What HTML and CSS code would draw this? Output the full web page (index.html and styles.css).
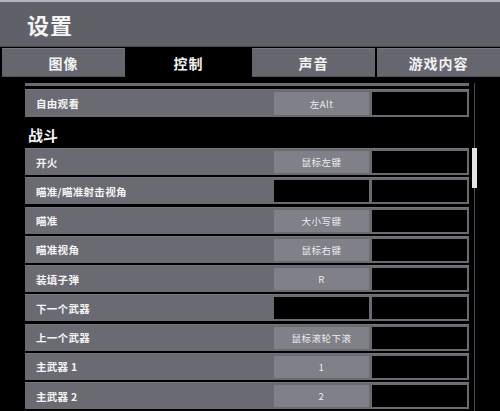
FILE: index.html
```html
<!DOCTYPE html>
<html lang="zh">
<head>
<meta charset="utf-8">
<title>设置</title>
<link rel="stylesheet" href="styles.css">
</head>
<body>
<div class="topline"></div>
<header class="header"><h1 class="title">设置</h1></header>
<nav class="tabs">
  <div class="tab tab-first">图像</div>
  <div class="tab tab-active">控制</div>
  <div class="tab">声音</div>
  <div class="tab">游戏内容</div>
</nav>
<main class="content">
  <div class="list">
    <div class="stub"></div>
    <div class="row row-first">
      <div class="label">自由观看</div>
      <div class="key">左Alt</div>
      <div class="key key-empty"></div>
    </div>
    <div class="section">战斗</div>
    <div class="rows">
      <div class="row"><div class="label">开火</div><div class="key">鼠标左键</div><div class="key key-empty"></div></div>
      <div class="row"><div class="label">瞄准/瞄准射击视角</div><div class="key key-empty"></div><div class="key key-empty"></div></div>
      <div class="row"><div class="label">瞄准</div><div class="key">大小写键</div><div class="key key-empty"></div></div>
      <div class="row"><div class="label">瞄准视角</div><div class="key">鼠标右键</div><div class="key key-empty"></div></div>
      <div class="row"><div class="label">装填子弹</div><div class="key">R</div><div class="key key-empty"></div></div>
      <div class="row"><div class="label">下一个武器</div><div class="key key-empty"></div><div class="key key-empty"></div></div>
      <div class="row"><div class="label">上一个武器</div><div class="key">鼠标滚轮下滚</div><div class="key key-empty"></div></div>
      <div class="row"><div class="label">主武器 1</div><div class="key">1</div><div class="key key-empty"></div></div>
      <div class="row"><div class="label">主武器 2</div><div class="key">2</div><div class="key key-empty"></div></div>
    </div>
  </div>
  <div class="scroll"><div class="thumb"></div></div>
</main>
</body>
</html>
```
FILE: styles.css
```css
html, body {
  margin: 0;
  padding: 0;
}
body {
  width: 500px;
  height: 411px;
  overflow: hidden;
  background: #000;
  color: #f2f2f2;
  font-family: "Noto Sans CJK SC", "Noto Sans", "Liberation Sans", sans-serif;
}
.topline {
  height: 2px;
  background: #b4b5b9;
}
.header {
  height: 45px;
  background: #606168;
  border-bottom: 1px solid #46474c;
  padding-left: 27px;
  box-sizing: border-box;
  display: flex;
  align-items: center;
}
.title {
  margin: 0;
  font-size: 22px;
  font-weight: bold;
  letter-spacing: 1px;
  color: #f4f4f4;
}
.tabs {
  display: flex;
  height: 30px;
  padding-top: 1px;
  box-sizing: border-box;
}
.tab {
  width: 123px;
  background: #66676e;
  border-top: 1px solid #78797f;
  border-bottom: 1px solid #55565c;
  box-sizing: border-box;
  display: flex;
  align-items: center;
  justify-content: center;
  font-size: 14px;
  font-weight: bold;
  letter-spacing: 1px;
  color: #f2f2f2;
}
.tab + .tab {
  margin-left: 2px;
}
.tab-first {
  margin-left: 2px;
}
.tab-active {
  width: 127px;
  margin-left: 0 !important;
  background: #000;
  border-color: #000;
}
.tab-active + .tab {
  margin-left: 0;
}
.content {
  display: flex;
  padding-left: 25px;
}
.list {
  width: 444px;
}
.stub {
  margin-top: 6px;
  height: 3px;
  background: #6a6a72;
}
.row {
  display: flex;
  height: 27px;
  background: #6a6a72;
  border-top: 1px solid #76767e;
  box-sizing: border-box;
  padding: 2px 2px 2px 0;
}
.row-first {
  margin-top: 3px;
  height: 28px;
}
.label {
  width: 249px;
  padding-left: 11px;
  box-sizing: border-box;
  display: flex;
  align-items: center;
  font-size: 10.5px;
  font-weight: bold;
  letter-spacing: 0.3px;
  color: #f4f4f4;
}
.key {
  width: 95px;
  background: #7f8088;
  display: flex;
  align-items: center;
  justify-content: center;
  font-size: 9.5px;
  letter-spacing: 0.5px;
  color: #ececec;
}
.key + .key {
  margin-left: 3px;
}
.key-empty {
  background: #000;
}
.section {
  height: 31px;
  padding-left: 3px;
  padding-top: 3px;
  box-sizing: border-box;
  display: flex;
  align-items: center;
  font-size: 15px;
  font-weight: bold;
  color: #f4f4f4;
}
.rows {
  display: flex;
  flex-direction: column;
  gap: 2.25px;
}
.scroll {
  width: 5px;
  margin-left: 3px;
  margin-top: 6px;
  height: 330px;
  background: linear-gradient(to right, transparent 2px, #4a4a4f 2px, #4a4a4f 3px, transparent 3px);
}
.thumb {
  margin-top: 65px;
  height: 40px;
  background: #e4e4e4;
}
```
